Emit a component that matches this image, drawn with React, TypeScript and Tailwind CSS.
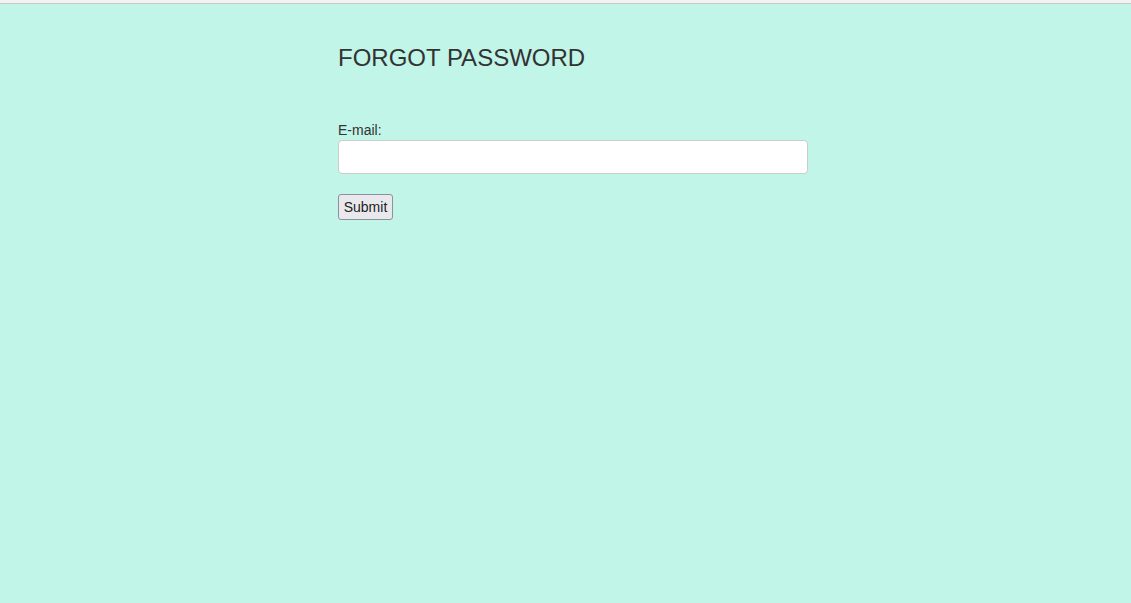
import React from 'react';

export default function App() {
  return (
    <div className="min-h-screen bg-[#c0f5e8] font-['Liberation_Sans',Arial,sans-serif] text-[#333]">
      <div className="h-[4px] border-b border-[#c9c9c9] bg-[#f2f2f2]"></div>
      <div className="ml-[338px] w-[470px]">
        <h1 className="mt-[41px] text-[24px] leading-[26px]">FORGOT PASSWORD</h1>
        <form className="mt-[49px]" onSubmit={(e) => e.preventDefault()}>
          <label htmlFor="email" className="block text-[14px] leading-[20px]">E-mail:</label>
          <input
            id="email"
            type="email"
            className="block h-[34px] w-[470px] rounded-[4px] border border-[#ccc] bg-white px-3 text-[14px]"
          />
          <button
            type="submit"
            className="mt-[20px] h-[26px] w-[55px] rounded-[3px] border border-[#8f8f9d] bg-[#e9e9ed] text-[14px] leading-none text-[#222]"
          >
            Submit
          </button>
        </form>
      </div>
    </div>
  );
}
